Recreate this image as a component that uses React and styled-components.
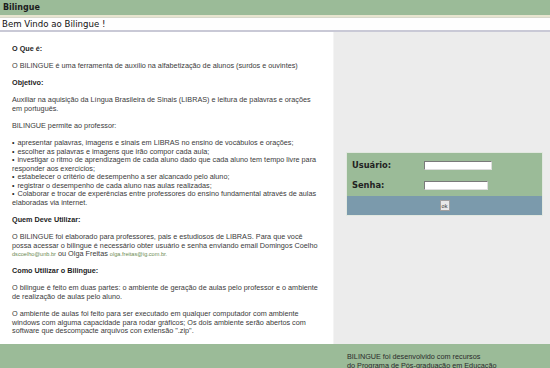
import React from 'react'
import styled, { createGlobalStyle } from 'styled-components'

const Global = createGlobalStyle`
  html, body {
    margin: 0;
    padding: 0;
    background: #ffffff;
  }
  body {
    width: 550px;
    height: 368px;
    overflow: hidden;
    font-family: "Liberation Sans", Arial, sans-serif;
  }
`

const Page = styled.div`
  display: flex;
  flex-direction: column;
  width: 550px;
  height: 368px;
  overflow: hidden;
`

const TopBar = styled.div`
  flex-shrink: 0;
  height: 15px;
  background: #9bbb98;
  border-bottom: 2px solid #e7e5cf;
  display: flex;
  align-items: center;
  padding-left: 3px;
  font-family: "DejaVu Sans", Verdana, sans-serif;
  font-weight: bold;
  font-size: 8px;
  color: #1c1c1c;
`

const WelcomeBar = styled.div`
  flex-shrink: 0;
  height: 12px;
  background: #fefefe;
  border-top: 1px solid #d8d8cc;
  border-bottom: 2px solid #c9c9d6;
  display: flex;
  align-items: center;
  padding-left: 2px;
  font-family: "DejaVu Sans", Verdana, sans-serif;
  font-size: 8.6px;
  color: #111;
`

const Main = styled.div`
  display: flex;
  flex: 0 0 312px;
`

const Content = styled.div`
  width: 309px;
  padding: 13px 12px 0 12px;
  font-size: 7.26px;
  line-height: 8.55px;
  color: #3a3a3a;
`

const Side = styled.div`
  flex: 1;
  background: #ececec;
  border-left: 1px solid #f4f4f4;
  padding: 120px 7px 0 12px;
`

const Title = styled.div`
  font-weight: bold;
  color: #1e1e1e;
  margin-bottom: 8.55px;
`

const Para = styled.p`
  margin: 0 0 8.55px 0;
`

const List = styled.ul`
  list-style: none;
  margin: 0 0 8.55px 0;
  padding: 0;
`

const Item = styled.li`
  &::before {
    content: "•";
    font-size: 7px;
    color: #222;
    margin-right: 3px;
  }
`

const Mail = styled.span`
  font-size: 5.6px;
  color: #6b8a52;
`

const Bigger = styled.span`
  font-size: 7.3px;
`

const Login = styled.form`
  margin: 0;
  background: #9bbb98;
  border: 1px solid #e2e8e0;
`

const Fields = styled.div`
  display: grid;
  grid-template-columns: 72px 1fr;
  row-gap: 10px;
  align-items: center;
  padding: 7px 0 6px 5px;
`

const Label = styled.label`
  font-family: "DejaVu Sans", Verdana, sans-serif;
  font-weight: bold;
  font-size: 8.3px;
  color: #222;
`

const Input = styled.input`
  box-sizing: border-box;
  width: ${p => p.$w}px;
  height: 9px;
  padding: 0;
  border: 1px solid #7a7a7a;
  border-right-color: #ddd;
  border-bottom-color: #ddd;
  background: #fff;
`

const Actions = styled.div`
  background: #7b9aac;
  height: 19px;
  display: flex;
  align-items: center;
  justify-content: center;
`

const OkButton = styled.button`
  box-sizing: border-box;
  width: 10px;
  height: 11px;
  padding: 0;
  border: 1px solid #a0a0a0;
  background: #e8e8e8;
  font-family: "Liberation Sans", Arial, sans-serif;
  font-size: 5.5px;
  color: #333;
`

const Footer = styled.div`
  flex: 1;
  min-height: 0;
  overflow: hidden;
  display: flex;
  background: #9bbb98;
  font-size: 7.26px;
  line-height: 8.55px;
  color: #2a2a2a;
`

const FooterBlank = styled.div`
  width: 333px;
`

const FooterText = styled.div`
  flex: 1;
  padding: 9px 0 0 14px;
`

export default function App() {
  return (
    <Page>
      <Global />
      <TopBar>Bilingue</TopBar>
      <WelcomeBar>Bem Vindo ao Bilingue !</WelcomeBar>
      <Main>
        <Content>
          <Title>O Que é:</Title>
          <Para>O BILINGUE é uma ferramenta de auxílio na alfabetização de alunos (surdos e ouvintes)</Para>
          <Title>Objetivo:</Title>
          <Para>Auxiliar na aquisição da Língua Brasileira de Sinais (LIBRAS) e leitura de palavras e orações em português.</Para>
          <Para>BILINGUE permite ao professor:</Para>
          <List>
            <Item>apresentar palavras, imagens e sinais em LIBRAS no ensino de vocábulos e orações;</Item>
            <Item>escolher as palavras e imagens que irão compor cada aula;</Item>
            <Item>investigar o ritmo de aprendizagem de cada aluno dado que cada aluno tem tempo livre para responder aos exercícios;</Item>
            <Item>estabelecer o critério de desempenho a ser alcancado pelo aluno;</Item>
            <Item>registrar o desempenho de cada aluno nas aulas realizadas;</Item>
            <Item>Colaborar e trocar de experências entre professores do ensino fundamental através de aulas elaboradas via internet.</Item>
          </List>
          <Title>Quem Deve Utilizar:</Title>
          <Para>
            O BILINGUE foi elaborado para professores, pais e estudiosos de LIBRAS. Para que você possa acessar o bilingue é necessário obter usuário e senha enviando email Domingos Coelho <Mail>dscoelho@unb.br</Mail> <Bigger>ou Olga Freitas</Bigger> <Mail>olga.freitas@ig.com.br.</Mail>
          </Para>
          <Title>Como Utilizar o Bilingue:</Title>
          <Para>O bilingue é feito em duas partes: o ambiente de geração de aulas pelo professor e o ambiente de realização de aulas pelo aluno.</Para>
          <Para>O ambiente de aulas foi feito para ser executado em qualquer computador com ambiente windows com alguma capacidade para rodar gráficos; Os dois ambiente serão abertos com software que descompacte arquivos con extensão ".zip".</Para>
        </Content>
        <Side>
          <Login onSubmit={e => e.preventDefault()}>
            <Fields>
              <Label htmlFor="usuario">Usuário:</Label>
              <Input id="usuario" $w={68} />
              <Label htmlFor="senha">Senha:</Label>
              <Input id="senha" type="password" $w={64} />
            </Fields>
            <Actions>
              <OkButton type="submit">ok</OkButton>
            </Actions>
          </Login>
        </Side>
      </Main>
      <Footer>
        <FooterBlank />
        <FooterText>
          BILINGUE foi desenvolvido com recursos<br />
          do Programa de Pós-graduação em Educação
        </FooterText>
      </Footer>
    </Page>
  )
}
